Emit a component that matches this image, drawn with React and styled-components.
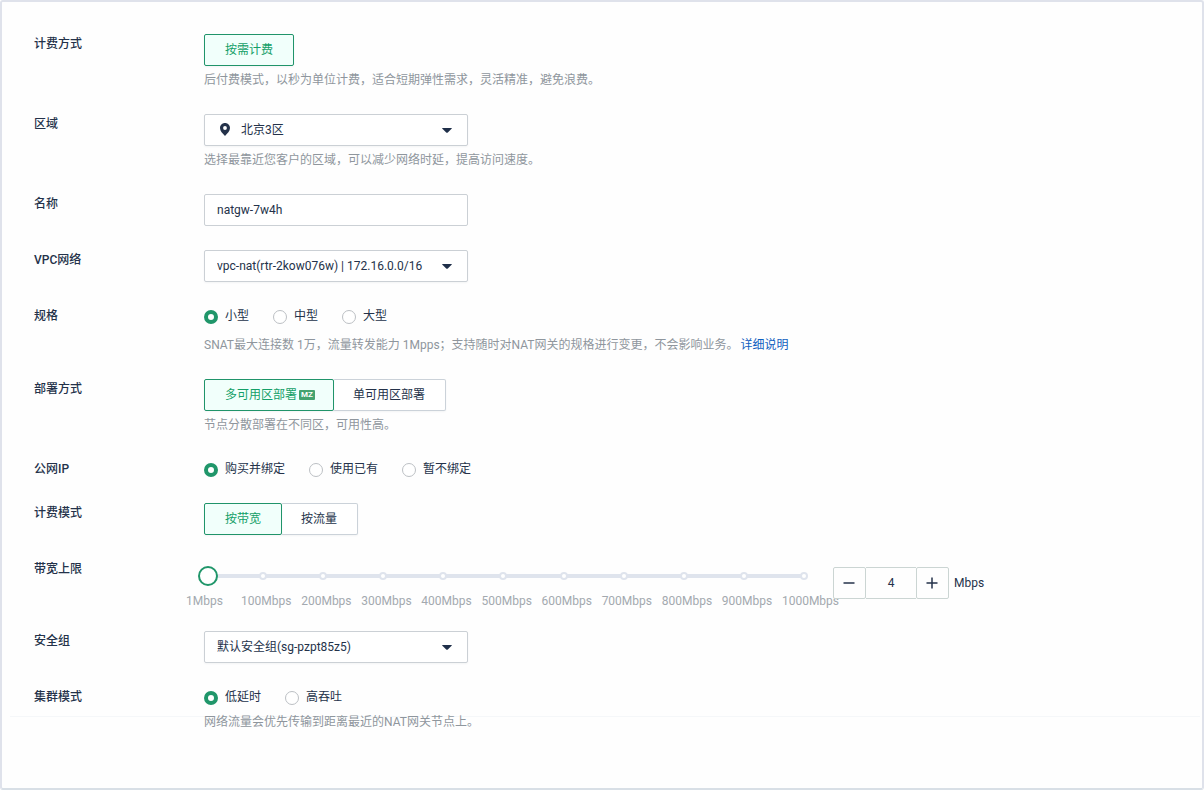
import React, { useState } from 'react';
import styled, { createGlobalStyle } from 'styled-components';

const GlobalStyle = createGlobalStyle`
  * {
    box-sizing: border-box;
  }

  body {
    margin: 0;
    color: #24324a;
    background-color: #fefefe;
  }

  body, button, input, select {
    font-family: Roboto, 'Noto Sans CJK SC', sans-serif;
    font-size: 12px;
    line-height: 20px;
  }
`;

const Page = styled.main`
  min-height: 100vh;
  padding: 32px 0 0;
  border: 2px solid #dfe2eb;
  border-bottom-color: #d8dfe6;
  border-radius: 3px;
`;

const Form = styled.form`
  display: flex;
  flex-direction: column;
  gap: 24px;
  padding: 0 32px;
`;

const Row = styled.div`
  display: grid;
  grid-template-columns: 170px minmax(0, 1fr);
  align-items: start;
`;

const Label = styled.label`
  font-weight: 500;
`;

const Help = styled.p`
  margin: ${(props) => props.$gap || 4}px 0 0;
  color: #8f969d;
`;

const HelpLink = styled.a`
  color: #1060c0;
  text-decoration: none;
  margin-left: 2px;
`;

const Segments = styled.div`
  display: flex;
`;

const Segment = styled.button`
  display: flex;
  align-items: center;
  height: 32px;
  padding: 0 20px;
  border: 1px solid #cbd2d9;
  border-radius: 2px;
  background-color: #ffffff;
  color: #24324a;
  box-shadow: 0 1px 2px #24324a0d;
  cursor: pointer;

  & + & {
    margin-left: -1px;
  }

  &:not([aria-pressed='true']):last-child {
    border-left: none;
  }

  &[aria-pressed='true'] {
    position: relative;
    border: 1px solid #20946a;
    background-color: #f1fffb;
    color: #14a068;
  }
`;

const Badge = styled.span`
  width: 16px;
  margin: 0 -2px 0 2px;
  border-radius: 1px;
  background-color: #45a26f;
  color: #ffffff;
  font-size: 8px;
  font-weight: 700;
  line-height: 10px;
  text-align: center;
`;

const Field = styled.div`
  position: relative;
  max-width: 264px;
`;

const TextInput = styled.input`
  display: block;
  width: 100%;
  height: 32px;
  padding: 0 12px;
  border: 1px solid #cbd0d5;
  border-radius: 2px;
  background-color: #ffffff;
  color: #24324a;
  outline: none;
`;

const SelectBox = styled.select`
  display: block;
  appearance: none;
  width: 100%;
  height: 32px;
  padding: 0 32px 0 ${(props) => (props.$withIcon ? 36 : 12)}px;
  border: 1px solid #cbd0d5;
  border-radius: 2px;
  background-color: #ffffff;
  color: #24324a;
  box-shadow: 0 1px 2px #24324a0d;
  outline: none;
`;

const Caret = styled.svg`
  position: absolute;
  top: 14px;
  right: 16px;
  pointer-events: none;
`;

const Pin = styled.svg`
  position: absolute;
  top: 9px;
  left: 16px;
  pointer-events: none;
`;

const Radios = styled.div`
  display: flex;
  flex-wrap: wrap;
  gap: 0 24px;
`;

const RadioLabel = styled.label`
  display: flex;
  align-items: center;
  gap: 7px;
  cursor: pointer;
`;

const Radio = styled.input`
  appearance: none;
  width: 14px;
  height: 14px;
  margin: 2px 0 0;
  border: 1px solid #bcc0c4;
  border-radius: 50%;
  background-color: #ffffff;

  &:checked {
    border: 4px solid #20966a;
  }
`;

const Bandwidth = styled.div`
  display: flex;
  align-items: flex-start;
  gap: 19px;
`;

const SliderBlock = styled.div`
  flex: 0 1 610px;
  min-width: 0;
  padding-top: 7px;
`;

const Track = styled.div`
  display: grid;
  align-items: center;
  margin-left: -8px;

  & > * {
    grid-area: 1 / 1;
  }
`;

const Rail = styled.div`
  height: 4px;
  margin: 0 10px;
  background-color: #dfe4ed;
`;

const Dots = styled.div`
  display: flex;
  justify-content: space-between;
  padding: 0 6px 0 63px;
`;

const Dot = styled.span`
  width: 8px;
  height: 8px;
  border: 2px solid #dfe4ed;
  border-radius: 50%;
  background-color: #ffffff;
`;

const Range = styled.input`
  appearance: none;
  width: 100%;
  height: 20px;
  margin: 0;
  background: transparent;
  z-index: 1;

  &::-webkit-slider-thumb {
    appearance: none;
    width: 20px;
    height: 20px;
    border: 2px solid #20966a;
    border-radius: 50%;
    background-color: #ffffff;
    cursor: pointer;
  }
`;

const Marks = styled.div`
  display: grid;
  grid-template-columns: 55fr repeat(10, 60fr);
  margin: 9px -28px 0 -18px;
  color: #a3a9af;
  line-height: 12px;
  white-space: nowrap;
`;

const Stepper = styled.div`
  display: flex;
  align-items: center;
  margin-top: 8px;
`;

const StepButton = styled.button`
  display: flex;
  align-items: center;
  justify-content: center;
  width: 33px;
  height: 32px;
  padding: 0 2px 0 0;
  border: 1px solid #cbd5d3;
  border-radius: 2px;
  background: transparent;
  color: #24324a;
  cursor: pointer;
`;

const StepInput = styled.input`
  width: 50px;
  height: 32px;
  padding: 0;
  border: solid #cbd5d3;
  border-width: 1px 0;
  background: transparent;
  color: #24324a;
  text-align: center;
  outline: none;
`;

const Unit = styled.span`
  margin-left: 5px;
`;

const Footer = styled.footer`
  height: 60px;
  margin: -16px 2px 0 8px;
  border-top: 1px solid #f5f7f9;
`;

const marks = [1, 100, 200, 300, 400, 500, 600, 700, 800, 900, 1000];

const CaretIcon = () => (
  <Caret width="10" height="5" viewBox="0 0 10 5" aria-hidden="true">
    <path d="M0.6 0H9.4Q10.2 0 9.6 0.7L5.8 4.5Q5 5.2 4.2 4.5L0.4 0.7Q-0.2 0 0.6 0Z" fill="#1f2f49" />
  </Caret>
);

const PinIcon = () => (
  <Pin width="10" height="13" viewBox="0 0 10 13" aria-hidden="true">
    <path
      d="M5 0C2.2 0 0 2.2 0 5C0 8 2.6 10.4 5 13C7.4 10.4 10 8 10 5C10 2.2 7.8 0 5 0ZM5 3.1A1.9 1.9 0 1 1 5 6.9A1.9 1.9 0 1 1 5 3.1Z"
      fill="#24324a"
      fillRule="evenodd"
    />
  </Pin>
);

const SegmentGroup = ({ labelId, options }) => {
  const [active, setActive] = useState(options[0].text);

  return (
    <Segments role="group" aria-labelledby={labelId}>
      {options.map(({ text, badge }) => (
        <Segment key={text} type="button" aria-pressed={active === text} onClick={() => setActive(text)}>
          {text}
          {badge && <Badge>{badge}</Badge>}
        </Segment>
      ))}
    </Segments>
  );
};

const RadioGroup = ({ name, labelId, options }) => {
  const [value, setValue] = useState(options[0]);

  return (
    <Radios role="radiogroup" aria-labelledby={labelId}>
      {options.map((option) => (
        <RadioLabel key={option}>
          <Radio type="radio" name={name} checked={value === option} onChange={() => setValue(option)} />
          {option}
        </RadioLabel>
      ))}
    </Radios>
  );
};

const Select = ({ id, text, icon }) => (
  <Field>
    <SelectBox id={id} $withIcon={Boolean(icon)}>
      <option>{text}</option>
    </SelectBox>
    {icon}
    <CaretIcon />
  </Field>
);

const App = () => {
  const [name, setName] = useState('natgw-7w4h');
  const [bandwidth, setBandwidth] = useState(4);

  const changeBandwidth = (next) => {
    const number = parseInt(next, 10) || 1;
    setBandwidth(Math.min(1000, Math.max(1, number)));
  };

  return (
    <>
      <GlobalStyle />
      <Page>
        <Form onSubmit={(e) => e.preventDefault()}>
          <Row>
            <Label as="span" id="billing">计费方式</Label>
            <div>
              <SegmentGroup labelId="billing" options={[{ text: '按需计费' }]} />
              <Help>后付费模式，以秒为单位计费，适合短期弹性需求，灵活精准，避免浪费。</Help>
            </div>
          </Row>
          <Row>
            <Label htmlFor="region">区域</Label>
            <div>
              <Select id="region" text="北京3区" icon={<PinIcon />} />
              <Help>选择最靠近您客户的区域，可以减少网络时延，提高访问速度。</Help>
            </div>
          </Row>
          <Row>
            <Label htmlFor="name">名称</Label>
            <Field>
              <TextInput id="name" type="text" value={name} onChange={(e) => setName(e.target.value)} />
            </Field>
          </Row>
          <Row>
            <Label htmlFor="vpc">VPC网络</Label>
            <Select id="vpc" text="vpc-nat(rtr-2kow076w) | 172.16.0.0/16" />
          </Row>
          <Row>
            <Label as="span" id="size">规格</Label>
            <div>
              <RadioGroup name="size" labelId="size" options={['小型', '中型', '大型']} />
              <Help $gap={9}>
                SNAT最大连接数 1万，流量转发能力 1Mpps；支持随时对NAT网关的规格进行变更，不会影响业务。
                <HelpLink href="#detail">详细说明</HelpLink>
              </Help>
            </div>
          </Row>
          <Row>
            <Label as="span" id="deploy">部署方式</Label>
            <div>
              <SegmentGroup
                labelId="deploy"
                options={[{ text: '多可用区部署', badge: 'MZ' }, { text: '单可用区部署' }]}
              />
              <Help>节点分散部署在不同区，可用性高。</Help>
            </div>
          </Row>
          <Row>
            <Label as="span" id="ip">公网IP</Label>
            <RadioGroup name="ip" labelId="ip" options={['购买并绑定', '使用已有', '暂不绑定']} />
          </Row>
          <Row>
            <Label as="span" id="mode">计费模式</Label>
            <SegmentGroup labelId="mode" options={[{ text: '按带宽' }, { text: '按流量' }]} />
          </Row>
          <Row>
            <Label htmlFor="bandwidth">带宽上限</Label>
            <Bandwidth>
              <SliderBlock>
                <Track>
                  <Rail />
                  <Dots>
                    {marks.slice(1).map((mark) => (
                      <Dot key={mark} />
                    ))}
                  </Dots>
                  <Range
                    id="bandwidth"
                    type="range"
                    min="1"
                    max="1000"
                    value={bandwidth}
                    onChange={(e) => changeBandwidth(e.target.value)}
                  />
                </Track>
                <Marks>
                  {marks.map((mark) => (
                    <span key={mark}>{mark}Mbps</span>
                  ))}
                </Marks>
              </SliderBlock>
              <Stepper>
                <StepButton type="button" aria-label="减少" onClick={() => changeBandwidth(bandwidth - 1)}>
                  <svg width="12" height="12" viewBox="0 0 12 12" stroke="currentColor" strokeWidth="1.5">
                    <path d="M0.5 6H11.5" />
                  </svg>
                </StepButton>
                <StepInput
                  type="text"
                  inputMode="numeric"
                  aria-label="带宽上限"
                  value={bandwidth}
                  onChange={(e) => changeBandwidth(e.target.value)}
                />
                <StepButton type="button" aria-label="增加" onClick={() => changeBandwidth(bandwidth + 1)}>
                  <svg width="12" height="12" viewBox="0 0 12 12" stroke="currentColor" strokeWidth="1.5">
                    <path d="M0.5 6H11.5M6 0.5V11.5" />
                  </svg>
                </StepButton>
                <Unit>Mbps</Unit>
              </Stepper>
            </Bandwidth>
          </Row>
          <Row>
            <Label htmlFor="security">安全组</Label>
            <Select id="security" text="默认安全组(sg-pzpt85z5)" />
          </Row>
          <Row>
            <Label as="span" id="cluster">集群模式</Label>
            <div>
              <RadioGroup name="cluster" labelId="cluster" options={['低延时', '高吞吐']} />
              <Help $gap={5}>网络流量会优先传输到距离最近的NAT网关节点上。</Help>
            </div>
          </Row>
        </Form>
        <Footer />
      </Page>
    </>
  );
};

export default App;
